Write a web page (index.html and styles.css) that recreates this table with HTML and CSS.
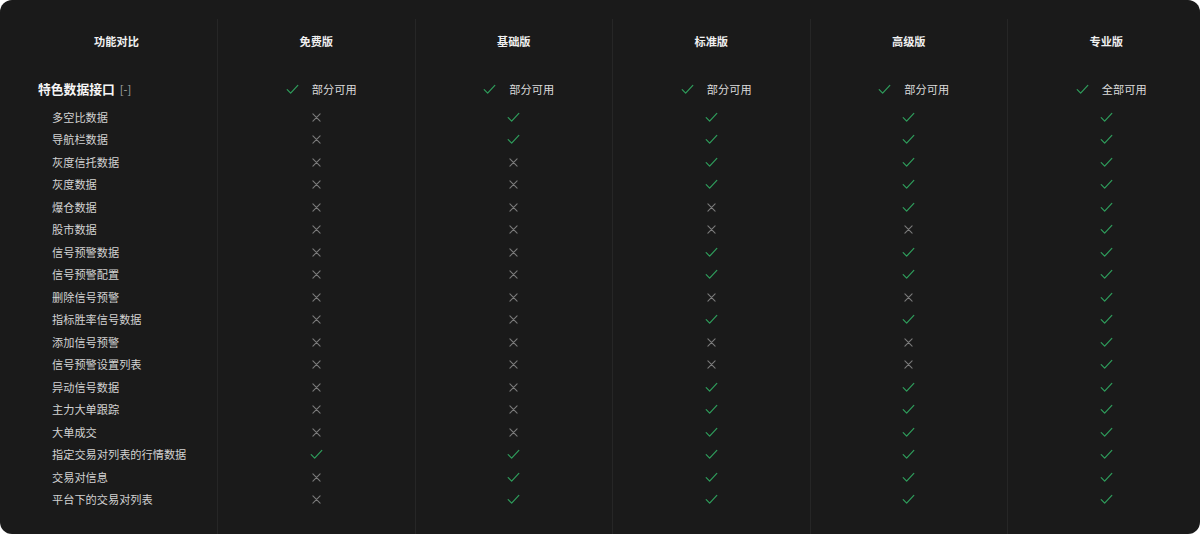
FILE: index.html
```html
<!DOCTYPE html>
<html lang="zh-CN">
<head>
<meta charset="utf-8">
<title>功能对比</title>
<link rel="stylesheet" href="styles.css">
</head>
<body>
<svg class="defs" aria-hidden="true">
  <symbol id="ok" viewBox="0 0 14 12"><path d="M1.2 6.2 L5 10 L12.8 1.6" fill="none" stroke="currentColor" stroke-width="1.3" stroke-linecap="round" stroke-linejoin="round"/></symbol>
  <symbol id="no" viewBox="0 0 10 10"><path d="M1 1 L9 9 M9 1 L1 9" fill="none" stroke="currentColor" stroke-width="1.2" stroke-linecap="round"/></symbol>
</svg>
<div class="wrap">
  <div class="col col-feat">
    <div class="cell head">功能对比</div>
    <div class="cell group">特色数据接口<span class="toggle">[-]</span></div>
    <div class="cell item">多空比数据</div>
    <div class="cell item">导航栏数据</div>
    <div class="cell item">灰度信托数据</div>
    <div class="cell item">灰度数据</div>
    <div class="cell item">爆仓数据</div>
    <div class="cell item">股市数据</div>
    <div class="cell item">信号预警数据</div>
    <div class="cell item">信号预警配置</div>
    <div class="cell item">删除信号预警</div>
    <div class="cell item">指标胜率信号数据</div>
    <div class="cell item">添加信号预警</div>
    <div class="cell item">信号预警设置列表</div>
    <div class="cell item">异动信号数据</div>
    <div class="cell item">主力大单跟踪</div>
    <div class="cell item">大单成交</div>
    <div class="cell item">指定交易对列表的行情数据</div>
    <div class="cell item">交易对信息</div>
    <div class="cell item">平台下的交易对列表</div>
  </div>

  <div class="col plan">
    <div class="cell head">免费版</div>
    <div class="cell group"><svg class="ic ok"><use href="#ok"/></svg><span>部分可用</span></div>
    <div class="cell v"><svg class="ic no"><use href="#no"/></svg></div>
    <div class="cell v"><svg class="ic no"><use href="#no"/></svg></div>
    <div class="cell v"><svg class="ic no"><use href="#no"/></svg></div>
    <div class="cell v"><svg class="ic no"><use href="#no"/></svg></div>
    <div class="cell v"><svg class="ic no"><use href="#no"/></svg></div>
    <div class="cell v"><svg class="ic no"><use href="#no"/></svg></div>
    <div class="cell v"><svg class="ic no"><use href="#no"/></svg></div>
    <div class="cell v"><svg class="ic no"><use href="#no"/></svg></div>
    <div class="cell v"><svg class="ic no"><use href="#no"/></svg></div>
    <div class="cell v"><svg class="ic no"><use href="#no"/></svg></div>
    <div class="cell v"><svg class="ic no"><use href="#no"/></svg></div>
    <div class="cell v"><svg class="ic no"><use href="#no"/></svg></div>
    <div class="cell v"><svg class="ic no"><use href="#no"/></svg></div>
    <div class="cell v"><svg class="ic no"><use href="#no"/></svg></div>
    <div class="cell v"><svg class="ic no"><use href="#no"/></svg></div>
    <div class="cell v"><svg class="ic ok"><use href="#ok"/></svg></div>
    <div class="cell v"><svg class="ic no"><use href="#no"/></svg></div>
    <div class="cell v"><svg class="ic no"><use href="#no"/></svg></div>
  </div>

  <div class="col plan">
    <div class="cell head">基础版</div>
    <div class="cell group"><svg class="ic ok"><use href="#ok"/></svg><span>部分可用</span></div>
    <div class="cell v"><svg class="ic ok"><use href="#ok"/></svg></div>
    <div class="cell v"><svg class="ic ok"><use href="#ok"/></svg></div>
    <div class="cell v"><svg class="ic no"><use href="#no"/></svg></div>
    <div class="cell v"><svg class="ic no"><use href="#no"/></svg></div>
    <div class="cell v"><svg class="ic no"><use href="#no"/></svg></div>
    <div class="cell v"><svg class="ic no"><use href="#no"/></svg></div>
    <div class="cell v"><svg class="ic no"><use href="#no"/></svg></div>
    <div class="cell v"><svg class="ic no"><use href="#no"/></svg></div>
    <div class="cell v"><svg class="ic no"><use href="#no"/></svg></div>
    <div class="cell v"><svg class="ic no"><use href="#no"/></svg></div>
    <div class="cell v"><svg class="ic no"><use href="#no"/></svg></div>
    <div class="cell v"><svg class="ic no"><use href="#no"/></svg></div>
    <div class="cell v"><svg class="ic no"><use href="#no"/></svg></div>
    <div class="cell v"><svg class="ic no"><use href="#no"/></svg></div>
    <div class="cell v"><svg class="ic no"><use href="#no"/></svg></div>
    <div class="cell v"><svg class="ic ok"><use href="#ok"/></svg></div>
    <div class="cell v"><svg class="ic ok"><use href="#ok"/></svg></div>
    <div class="cell v"><svg class="ic ok"><use href="#ok"/></svg></div>
  </div>

  <div class="col plan">
    <div class="cell head">标准版</div>
    <div class="cell group"><svg class="ic ok"><use href="#ok"/></svg><span>部分可用</span></div>
    <div class="cell v"><svg class="ic ok"><use href="#ok"/></svg></div>
    <div class="cell v"><svg class="ic ok"><use href="#ok"/></svg></div>
    <div class="cell v"><svg class="ic ok"><use href="#ok"/></svg></div>
    <div class="cell v"><svg class="ic ok"><use href="#ok"/></svg></div>
    <div class="cell v"><svg class="ic no"><use href="#no"/></svg></div>
    <div class="cell v"><svg class="ic no"><use href="#no"/></svg></div>
    <div class="cell v"><svg class="ic ok"><use href="#ok"/></svg></div>
    <div class="cell v"><svg class="ic ok"><use href="#ok"/></svg></div>
    <div class="cell v"><svg class="ic no"><use href="#no"/></svg></div>
    <div class="cell v"><svg class="ic ok"><use href="#ok"/></svg></div>
    <div class="cell v"><svg class="ic no"><use href="#no"/></svg></div>
    <div class="cell v"><svg class="ic no"><use href="#no"/></svg></div>
    <div class="cell v"><svg class="ic ok"><use href="#ok"/></svg></div>
    <div class="cell v"><svg class="ic ok"><use href="#ok"/></svg></div>
    <div class="cell v"><svg class="ic ok"><use href="#ok"/></svg></div>
    <div class="cell v"><svg class="ic ok"><use href="#ok"/></svg></div>
    <div class="cell v"><svg class="ic ok"><use href="#ok"/></svg></div>
    <div class="cell v"><svg class="ic ok"><use href="#ok"/></svg></div>
  </div>

  <div class="col plan">
    <div class="cell head">高级版</div>
    <div class="cell group"><svg class="ic ok"><use href="#ok"/></svg><span>部分可用</span></div>
    <div class="cell v"><svg class="ic ok"><use href="#ok"/></svg></div>
    <div class="cell v"><svg class="ic ok"><use href="#ok"/></svg></div>
    <div class="cell v"><svg class="ic ok"><use href="#ok"/></svg></div>
    <div class="cell v"><svg class="ic ok"><use href="#ok"/></svg></div>
    <div class="cell v"><svg class="ic ok"><use href="#ok"/></svg></div>
    <div class="cell v"><svg class="ic no"><use href="#no"/></svg></div>
    <div class="cell v"><svg class="ic ok"><use href="#ok"/></svg></div>
    <div class="cell v"><svg class="ic ok"><use href="#ok"/></svg></div>
    <div class="cell v"><svg class="ic no"><use href="#no"/></svg></div>
    <div class="cell v"><svg class="ic ok"><use href="#ok"/></svg></div>
    <div class="cell v"><svg class="ic no"><use href="#no"/></svg></div>
    <div class="cell v"><svg class="ic no"><use href="#no"/></svg></div>
    <div class="cell v"><svg class="ic ok"><use href="#ok"/></svg></div>
    <div class="cell v"><svg class="ic ok"><use href="#ok"/></svg></div>
    <div class="cell v"><svg class="ic ok"><use href="#ok"/></svg></div>
    <div class="cell v"><svg class="ic ok"><use href="#ok"/></svg></div>
    <div class="cell v"><svg class="ic ok"><use href="#ok"/></svg></div>
    <div class="cell v"><svg class="ic ok"><use href="#ok"/></svg></div>
  </div>

  <div class="col plan">
    <div class="cell head">专业版</div>
    <div class="cell group"><svg class="ic ok"><use href="#ok"/></svg><span>全部可用</span></div>
    <div class="cell v"><svg class="ic ok"><use href="#ok"/></svg></div>
    <div class="cell v"><svg class="ic ok"><use href="#ok"/></svg></div>
    <div class="cell v"><svg class="ic ok"><use href="#ok"/></svg></div>
    <div class="cell v"><svg class="ic ok"><use href="#ok"/></svg></div>
    <div class="cell v"><svg class="ic ok"><use href="#ok"/></svg></div>
    <div class="cell v"><svg class="ic ok"><use href="#ok"/></svg></div>
    <div class="cell v"><svg class="ic ok"><use href="#ok"/></svg></div>
    <div class="cell v"><svg class="ic ok"><use href="#ok"/></svg></div>
    <div class="cell v"><svg class="ic ok"><use href="#ok"/></svg></div>
    <div class="cell v"><svg class="ic ok"><use href="#ok"/></svg></div>
    <div class="cell v"><svg class="ic ok"><use href="#ok"/></svg></div>
    <div class="cell v"><svg class="ic ok"><use href="#ok"/></svg></div>
    <div class="cell v"><svg class="ic ok"><use href="#ok"/></svg></div>
    <div class="cell v"><svg class="ic ok"><use href="#ok"/></svg></div>
    <div class="cell v"><svg class="ic ok"><use href="#ok"/></svg></div>
    <div class="cell v"><svg class="ic ok"><use href="#ok"/></svg></div>
    <div class="cell v"><svg class="ic ok"><use href="#ok"/></svg></div>
    <div class="cell v"><svg class="ic ok"><use href="#ok"/></svg></div>
  </div>
</div>
</body>
</html>
```
FILE: styles.css
```css
html, body {
  margin: 0;
  padding: 0;
  background: #ffffff;
}

body {
  font-family: "Noto Sans CJK SC", "Noto Sans", sans-serif;
}

.defs {
  position: absolute;
  width: 0;
  height: 0;
  overflow: hidden;
}

.wrap {
  width: 1200px;
  height: 534px;
  box-sizing: border-box;
  padding: 19px 0 0 16px;
  background: #1a1a1a;
  border-radius: 12px;
  overflow: hidden;
  display: grid;
  grid-template-columns: 201px repeat(5, 197.5px);
}

.col {
  display: flex;
  flex-direction: column;
}

.plan {
  border-left: 1px solid #262626;
}

.cell {
  display: flex;
  align-items: center;
  box-sizing: border-box;
  height: 22.5px;
  font-size: 11.2px;
  line-height: 1;
}

.head {
  height: 46px;
  justify-content: center;
  font-weight: 700;
  color: #f0f0f0;
}

.group {
  height: 41px;
  padding-top: 8px;
}

.col-feat .group {
  padding-left: 22px;
  font-size: 12.8px;
  font-weight: 700;
  color: #f5f5f5;
}

.toggle {
  margin-left: 5px;
  font-size: 11.2px;
  font-weight: 400;
  color: #a8a8a8;
}

.plan .group {
  justify-content: center;
  padding-left: 10px;
  color: #dcdcdc;
  gap: 13px;
}

.item {
  padding-left: 36px;
  color: #d2d2d2;
}

.v {
  justify-content: center;
}

.ic {
  display: block;
}

.ok {
  width: 13px;
  height: 11px;
  color: #2f9e5c;
}

.no {
  width: 9px;
  height: 9px;
  color: #7b7b7b;
}
```
